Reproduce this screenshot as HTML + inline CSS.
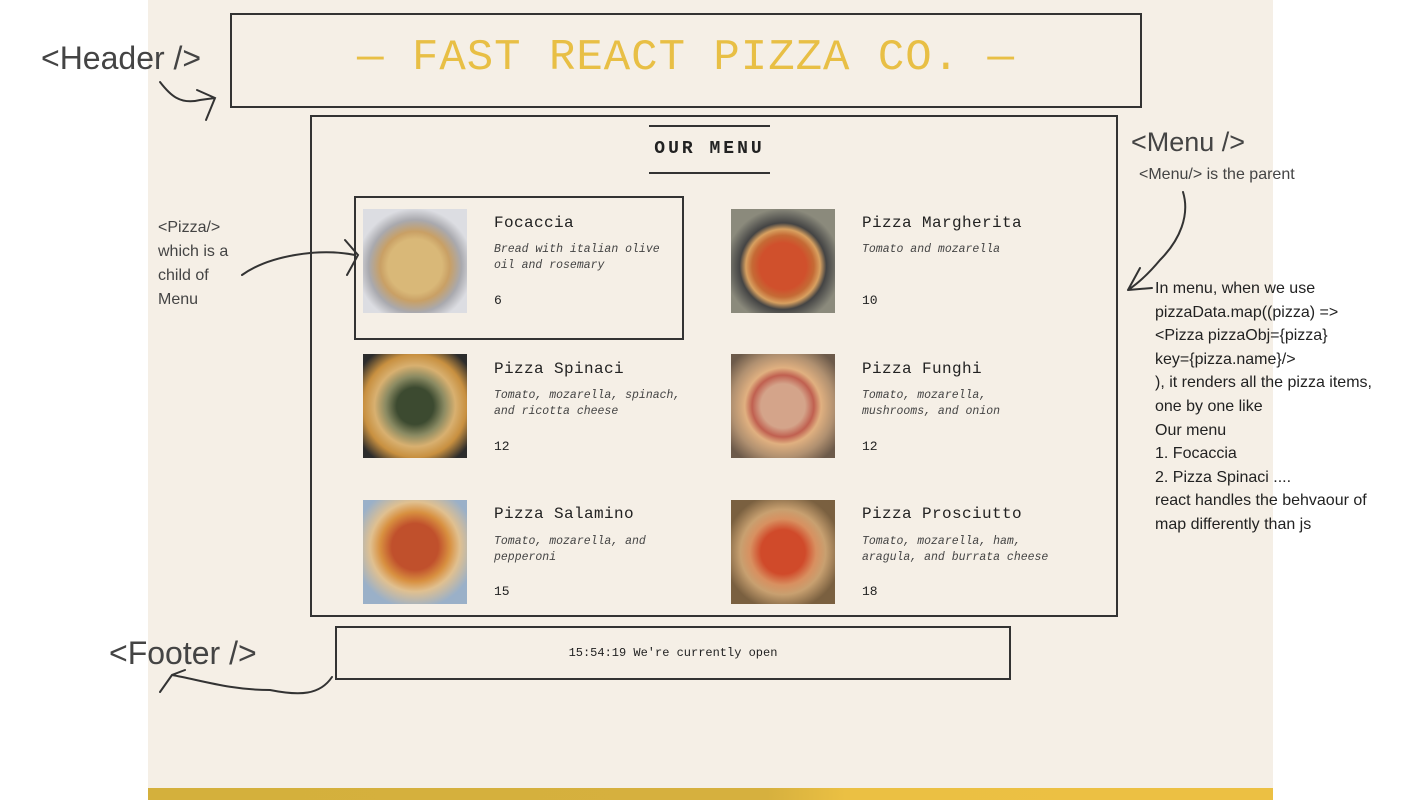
<!DOCTYPE html>
<html><head><meta charset="utf-8"><style>
*{margin:0;padding:0;box-sizing:border-box}
body{width:1422px;height:800px;background:#fff;position:relative;overflow:hidden;font-family:"Liberation Sans",sans-serif}
.page{position:absolute;left:148px;top:0;width:1125px;height:800px;background:#f5efe6}
.bar{position:absolute;left:148px;top:788px;width:1125px;height:12px;background:linear-gradient(90deg,#d4b03c,#d6b03e 55%,#ebc043 62%,#ecc043)}
.box{position:absolute;border:2px solid #333}
.mono{font-family:"Liberation Mono",monospace;color:#222}
.img{position:absolute;width:104px;height:104px}
.name{position:absolute;font-size:16px;font-family:"Liberation Mono",monospace;color:#222;letter-spacing:0.4px}
.desc{position:absolute;font-size:11.5px;font-style:italic;font-family:"Liberation Mono",monospace;color:#444;line-height:16px;width:185px}
.price{position:absolute;font-size:13px;font-family:"Liberation Mono",monospace;color:#222}
.ann{position:absolute;color:#444;font-family:"Liberation Sans",sans-serif}
</style></head><body>
<div class="page"></div>
<div class="bar"></div>
<div class="box" style="left:230px;top:13px;width:912px;height:95px"></div>
<div class="mono" style="position:absolute;left:230px;top:33px;width:912px;text-align:center;font-size:44px;color:#e8bf45;letter-spacing:1px">— FAST REACT PIZZA CO. —</div>
<div class="box" style="left:310px;top:115px;width:808px;height:502px"></div>
<div style="position:absolute;left:649px;top:125px;width:121px;height:2px;background:#333"></div>
<div style="position:absolute;left:649px;top:172px;width:121px;height:2px;background:#333"></div>
<div class="mono" style="position:absolute;left:649px;top:139px;width:121px;text-align:center;font-size:18px;font-weight:bold;letter-spacing:3px">OUR MENU</div>
<div class="box" style="left:354px;top:196px;width:330px;height:144px"></div>

<div class="img" style="left:363px;top:209px;background:radial-gradient(circle at 50% 55%,#d9b878 0 35%,#c9a065 45%,#a9a9ae 60%,#dcdde2 75%)"></div>
<div class="img" style="left:731px;top:209px;background:radial-gradient(circle at 50% 55%,#d0502c 0 30%,#c56a35 40%,#d8a060 48%,#444 56%,#8b8a7c 75%)"></div>
<div class="img" style="left:363px;top:354px;background:radial-gradient(circle at 50% 50%,#3c4a30 0 25%,#8a8a62 40%,#d8b070 55%,#c89040 70%,#2c2c2c 90%)"></div>
<div class="img" style="left:731px;top:354px;background:radial-gradient(circle at 50% 50%,#d4a48a 0 30%,#c06050 42%,#e0b080 52%,#b09070 70%,#6c5a4a 90%)"></div>
<div class="img" style="left:363px;top:500px;background:radial-gradient(circle at 50% 45%,#c0502c 0 30%,#d89040 45%,#e0c090 58%,#9ab0c8 80%)"></div>
<div class="img" style="left:731px;top:500px;background:radial-gradient(circle at 50% 50%,#d04a2a 0 30%,#d89060 45%,#c8a070 58%,#7a6040 80%)"></div>

<div class="name" style="left:494px;top:214px">Focaccia</div>
<div class="desc" style="left:494px;top:242px">Bread with italian olive oil and rosemary</div>
<div class="price" style="left:494px;top:293px">6</div>
<div class="name" style="left:862px;top:214px">Pizza Margherita</div>
<div class="desc" style="left:862px;top:242px">Tomato and mozarella</div>
<div class="price" style="left:862px;top:293px">10</div>
<div class="name" style="left:494px;top:360px">Pizza Spinaci</div>
<div class="desc" style="left:494px;top:388px;width:200px">Tomato, mozarella, spinach, and ricotta cheese</div>
<div class="price" style="left:494px;top:439px">12</div>
<div class="name" style="left:862px;top:360px">Pizza Funghi</div>
<div class="desc" style="left:862px;top:388px;width:150px">Tomato, mozarella, mushrooms, and onion</div>
<div class="price" style="left:862px;top:439px">12</div>
<div class="name" style="left:494px;top:505px">Pizza Salamino</div>
<div class="desc" style="left:494px;top:534px;width:170px">Tomato, mozarella, and pepperoni</div>
<div class="price" style="left:494px;top:584px">15</div>
<div class="name" style="left:862px;top:505px">Pizza Prosciutto</div>
<div class="desc" style="left:862px;top:534px;width:200px">Tomato, mozarella, ham, aragula, and burrata cheese</div>
<div class="price" style="left:862px;top:584px">18</div>

<div class="box" style="left:335px;top:626px;width:676px;height:54px"></div>
<div class="mono" style="position:absolute;left:335px;top:646px;width:676px;text-align:center;font-size:12px">15:54:19 We're currently open</div>

<div class="ann" style="left:41px;top:40px;font-size:32px">&lt;Header /&gt;</div>
<div class="ann" style="left:1131px;top:127px;font-size:27px">&lt;Menu /&gt;</div>
<div class="ann" style="left:1139px;top:166px;font-size:16px">&lt;Menu/&gt; is the parent</div>
<div class="ann" style="left:158px;top:216px;font-size:16px;line-height:24px">&lt;Pizza/&gt;<br>which is a<br>child of<br>Menu</div>
<div class="ann" style="left:109px;top:635px;font-size:32px">&lt;Footer /&gt;</div>
<div class="ann" style="left:1155px;top:277px;font-size:16px;line-height:23.6px;color:#222">In menu, when we use<br>pizzaData.map((pizza) =&gt;<br>&lt;Pizza pizzaObj={pizza}<br>key={pizza.name}/&gt;<br>), it renders all the pizza items,<br>one by one like<br>Our menu<br>1. Focaccia<br>2. Pizza Spinaci ....<br>react handles the behvaour of<br>map differently than js</div>

<svg width="1422" height="800" style="position:absolute;left:0;top:0" fill="none" stroke="#333" stroke-width="2" stroke-linecap="round">
<path d="M160 82 C170 95 180 105 200 100 L215 98 M197 90 L215 98 L206 120"/>
<path d="M1183 192 C1190 215 1180 240 1160 260 C1150 272 1140 282 1128 290 M1128 290 L1140 268 M1128 290 L1152 288"/>
<path d="M242 275 C270 255 320 248 355 255 M345 240 L358 255 L347 275"/>
<path d="M332 677 C320 695 300 696 270 690 C230 690 200 680 172 675 M185 670 L172 675 L160 692"/>
</svg>
</body></html>
